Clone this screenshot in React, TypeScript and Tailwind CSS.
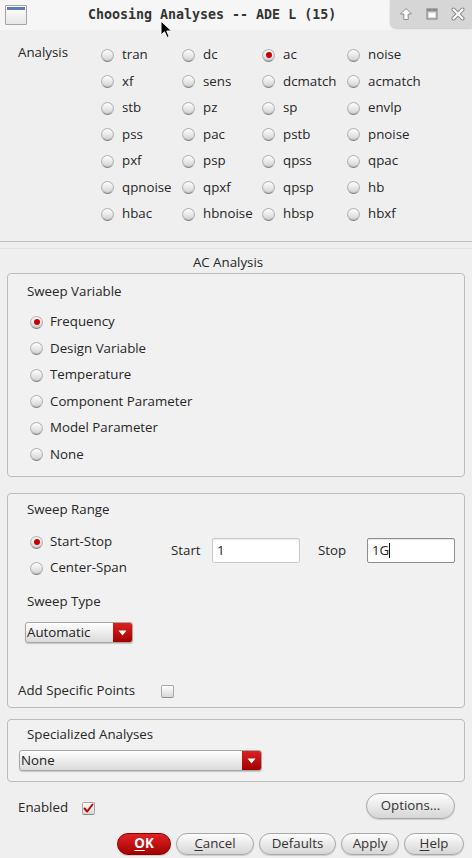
import React from "react";

const Radio = ({ on }: { on?: boolean }) => (
  <span className="relative w-[13px] h-[13px] shrink-0 rounded-full border border-[#b4b4b4] border-b-[#7e7e7e] bg-linear-to-b from-[#ffffff] to-[#d2d2d2] shadow-[inset_0_-1px_1px_rgba(0,0,0,0.12)] flex items-center justify-center">
    {on && <span className="w-[6px] h-[6px] rounded-full bg-[#c80000]" />}
  </span>
);

const Checkbox = ({ on }: { on?: boolean }) => (
  <span className="w-[13px] h-[13px] shrink-0 rounded-[2px] border border-[#a8a8a8] border-b-[#8a8a8a] bg-linear-to-b from-white to-[#d8d8d8] flex items-center justify-center">
    {on && (
      <svg width="11" height="11" viewBox="0 0 11 11">
        <path d="M1.5 5.5 L4.2 8.5 L9.5 1.5" fill="none" stroke="#c80000" strokeWidth="2" strokeLinecap="round" strokeLinejoin="round" />
      </svg>
    )}
  </span>
);

const Dropdown = ({ label, className }: { label: string; className: string }) => (
  <div className={className}>
    <div className="flex h-[21px] rounded-[3px] border border-[#a6a6a6] bg-linear-to-b from-white to-[#dadada] shadow-[0_1px_1px_rgba(0,0,0,0.18)] overflow-hidden">
      <span className="flex-1 pl-[1px] leading-[19px] text-[#222]">{label}</span>
      <span className="w-[19px] bg-linear-to-b from-[#dc2020] to-[#a20000] flex items-center justify-center">
        <svg width="9" height="6" viewBox="0 0 9 6">
          <path d="M0.5 0.5 L8.5 0.5 L4.5 5.5 Z" fill="#ffffff" />
        </svg>
      </span>
    </div>
  </div>
);

const Btn = ({ children, className }: { children: React.ReactNode; className: string }) => (
  <div className={"h-[22px] rounded-full border flex items-center justify-center shadow-[0_1px_1px_rgba(0,0,0,0.15)] " + className}>
    {children}
  </div>
);

const rows = [
  ["tran", "dc", "ac", "noise"],
  ["xf", "sens", "dcmatch", "acmatch"],
  ["stb", "pz", "sp", "envlp"],
  ["pss", "pac", "pstb", "pnoise"],
  ["pxf", "psp", "qpss", "qpac"],
  ["qpnoise", "qpxf", "qpsp", "hb"],
  ["hbac", "hbnoise", "hbsp", "hbxf"],
];

const sweepVars = [
  "Frequency",
  "Design Variable",
  "Temperature",
  "Component Parameter",
  "Model Parameter",
  "None",
];

export default function App() {
  return (
    <div className="relative w-[472px] h-[858px] overflow-hidden bg-[#efefef] font-['Open_Sans'] text-[13.3px] text-[#262626] flex flex-col">
      {/* Title bar */}
      <div className="h-[30px] shrink-0 flex items-start bg-[#f6f6f6]">
        <div className="mt-[5px] ml-[5px] w-[22px] h-[20px] border border-[#a4a4a4] bg-linear-to-b from-white to-[#e6e6e6] rounded-[1px] p-px">
          <div className="h-[3px] bg-[#5a7cc2]" />
        </div>
        <div className="ml-[61px] mt-[5px] leading-[20px] font-['DejaVu_Sans_Mono'] font-bold text-[13.3px] text-[#333] whitespace-nowrap">
          Choosing Analyses -- ADE L (15)
        </div>
        <div className="ml-auto w-[82px] h-[28px] bg-[#d6d6d6] rounded-bl-[6px] shadow-[0_1px_2px_rgba(0,0,0,0.2)] flex items-center pl-[9px] gap-[12px]">
          <svg width="14" height="14" viewBox="0 0 14 14">
            <path d="M7 1.5 L12.5 7 H9.2 V12.5 H4.8 V7 H1.5 Z" fill="#ffffff" stroke="#8c8c8c" strokeWidth="1" strokeLinejoin="round" />
          </svg>
          <svg width="14" height="14" viewBox="0 0 14 14">
            <rect x="2" y="2" width="10" height="10" fill="none" stroke="#8c8c8c" strokeWidth="1.2" />
            <rect x="2" y="2" width="10" height="2.5" fill="#8c8c8c" />
            <rect x="4" y="6" width="6" height="4" fill="#ffffff" />
          </svg>
          <svg width="14" height="14" viewBox="0 0 14 14">
            <path d="M2.5 2.5 L11.5 11.5 M11.5 2.5 L2.5 11.5" stroke="#8c8c8c" strokeWidth="4" strokeLinecap="round" />
            <path d="M2.5 2.5 L11.5 11.5 M11.5 2.5 L2.5 11.5" stroke="#ffffff" strokeWidth="2" strokeLinecap="round" />
          </svg>
        </div>
      </div>

      {/* Analysis */}
      <div className="flex pl-[18px] pt-[12px]">
        <div className="w-[83px] leading-[20px]">Analysis</div>
        <div className="grid grid-cols-[81px_80px_85px_auto] auto-rows-[26.5px]">
          {rows.flat().map((t) => (
            <div key={t} className="flex items-center gap-[8px] whitespace-nowrap">
              <Radio on={t === "ac"} />
              <span>{t}</span>
            </div>
          ))}
        </div>
      </div>

      <div className="mt-[13.5px] h-px bg-[#c2c2c2]" />
      <div className="mt-[6px] h-px bg-[#e2e2e2]" />
      <div className="mt-[3px] leading-[20px] text-center pr-[16px]">AC Analysis</div>

      {/* Sweep Variable */}
      <div className="mx-[7px] mt-[1px] h-[204px] shrink-0 border border-[#bcbcbc] rounded-[4px] bg-[#f1f1f1]">
        <div className="ml-[19px] mt-[7px] leading-[20px]">Sweep Variable</div>
        <div className="ml-[22px] mt-[7.75px] flex flex-col">
          {sweepVars.map((t) => (
            <div key={t} className="h-[26.5px] flex items-center gap-[7px]">
              <Radio on={t === "Frequency"} />
              <span>{t}</span>
            </div>
          ))}
        </div>
      </div>

      {/* Sweep Range */}
      <div className="mx-[7px] mt-[16px] h-[215px] shrink-0 border border-[#bcbcbc] rounded-[4px] bg-[#f1f1f1]">
        <div className="ml-[19px] mt-[5px] leading-[20px]">Sweep Range</div>
        <div className="flex mt-[10px]">
          <div className="ml-[22px] w-[141px] flex flex-col">
            <div className="h-[26px] flex items-center gap-[7px]">
              <Radio on />
              <span>Start-Stop</span>
            </div>
            <div className="h-[26px] flex items-center gap-[7px]">
              <Radio />
              <span>Center-Span</span>
            </div>
          </div>
          <div className="flex items-center h-[25px] mt-[9px]">
            <span className="w-[41px]">Start</span>
            <div className="w-[88px] h-[25px] bg-white border border-[#cbcbcb] rounded-[2px] flex items-center pl-[4px] shadow-[inset_0_1px_1px_rgba(0,0,0,0.08)]">
              1
            </div>
            <span className="ml-[18px] w-[49px]">Stop</span>
            <div className="w-[88px] h-[25px] bg-white border border-[#8e8e8e] rounded-[2px] flex items-center pl-[4px] shadow-[inset_0_1px_1px_rgba(0,0,0,0.1)]">
              1G
              <span className="w-px h-[15px] bg-[#111]" />
            </div>
          </div>
        </div>
        <div className="ml-[19px] mt-[10px] leading-[20px]">Sweep Type</div>
        <Dropdown label="Automatic" className="ml-[17px] mt-[11px] w-[108px]" />
        <div className="flex items-center mt-[38px] ml-[10px] h-[20px]">
          <span className="w-[143px]">Add Specific Points</span>
          <Checkbox />
        </div>
      </div>

      {/* Specialized Analyses */}
      <div className="mx-[7px] mt-[11px] h-[63px] shrink-0 border border-[#bcbcbc] rounded-[4px] bg-[#f1f1f1]">
        <div className="ml-[19px] mt-[4px] leading-[20px]">Specialized Analyses</div>
        <Dropdown label="None" className="ml-[11px] mt-[6px] w-[243px]" />
      </div>

      {/* Enabled / Options */}
      <div className="mt-[11px] h-[26px] shrink-0 flex items-start">
        <div className="ml-[18px] mt-[5px] flex items-center h-[20px]">
          <span className="w-[64px]">Enabled</span>
          <Checkbox on />
        </div>
        <Btn className="ml-auto mr-[17px] w-[89px] h-[26px] border-[#a8a8a8] bg-linear-to-b from-[#fdfdfd] to-[#d6d6d6] text-[#333]">
          Options...
        </Btn>
      </div>

      {/* Bottom buttons */}
      <div className="mt-[14px] flex justify-end gap-[5px] pr-[8px]">
        <Btn className="w-[54px] border-[#8a0000] bg-linear-to-b from-[#e22222] to-[#a40000] text-white font-bold">
          <span className="underline underline-offset-2">O</span>K
        </Btn>
        <Btn className="w-[78px] border-[#a8a8a8] bg-linear-to-b from-[#fdfdfd] to-[#d6d6d6] text-[#333]">
          <span className="underline underline-offset-2">C</span>ancel
        </Btn>
        <Btn className="w-[77px] border-[#a8a8a8] bg-linear-to-b from-[#fdfdfd] to-[#d6d6d6] text-[#333]">
          Defaults
        </Btn>
        <Btn className="w-[58px] border-[#a8a8a8] bg-linear-to-b from-[#fdfdfd] to-[#d6d6d6] text-[#333]">
          Apply
        </Btn>
        <Btn className="w-[60px] border-[#a8a8a8] bg-linear-to-b from-[#fdfdfd] to-[#d6d6d6] text-[#333]">
          <span className="underline underline-offset-2">H</span>elp
        </Btn>
      </div>

      {/* Mouse cursor overlay */}
      <svg className="absolute left-[160px] top-[20px]" width="13" height="19" viewBox="0 0 13 19">
        <path d="M1 1 L1 15 L4.5 11.8 L7 17.5 L9.2 16.5 L6.8 11 L11.5 11 Z" fill="#000" stroke="#fff" strokeWidth="1" strokeLinejoin="round" />
      </svg>
    </div>
  );
}
